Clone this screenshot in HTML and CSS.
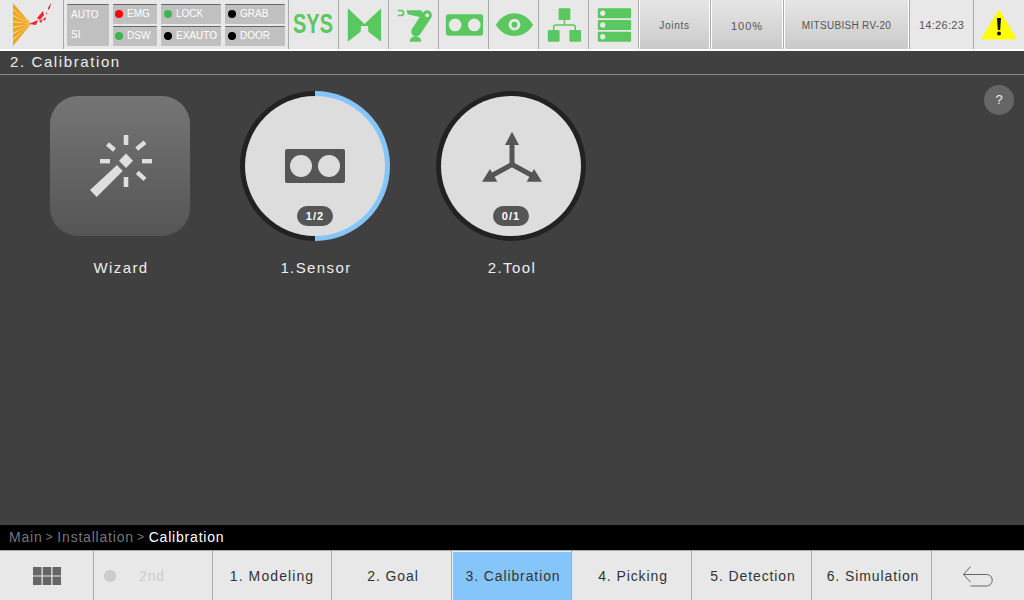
FILE: index.html
```html
<!DOCTYPE html>
<html lang="en">
<head>
  <meta charset="UTF-8" />
  <title>Calibration</title>
  <link rel="stylesheet" href="styles.css">
</head>
<body>

  <header class="topbar">
    <div class="cell logo">
      <svg width="63" height="49" viewBox="0 0 63 49">
        <g fill="#f2a516">
          <polygon points="13,3 13,9 31,24" />
          <polygon points="13,10 13,15 31,24" />
          <polygon points="13,16 13,21 31,24" />
          <polygon points="13,22 13,27 31,24" />
          <polygon points="13,28 13,33 31,24" />
          <polygon points="13,34 13,39 31,24" />
          <polygon points="13,40 13,46 31,24" />
        </g>
        <g fill="#e8252a">
          <polygon points="29,24 38,20 36,25" />
          <polygon points="37,18 43,11 44,15 40,20" />
          <polygon points="43,19 46,17 45,21" />
          <polygon points="39,21 43,19 41,23" />
          <polygon points="46,13 47,12 47,15" />
          <polygon points="48,8 51,3 50,8 48,10" />
        </g>
      </svg>
    </div>

    <div class="cell status">
      <div class="lamp mode">
        <span>AUTO</span>
        <span>SI</span>
      </div>
      <div class="lamp"><i class="dot red"></i>EMG</div>
      <div class="lamp wide"><i class="dot green"></i>LOCK</div>
      <div class="lamp wide"><i class="dot"></i>GRAB</div>
      <div class="lamp"><i class="dot green"></i>DSW</div>
      <div class="lamp wide"><i class="dot"></i>EXAUTO</div>
      <div class="lamp wide"><i class="dot"></i>DOOR</div>
    </div>

    <div class="cell icon"><span class="sys">SYS</span></div>

    <div class="cell icon">
      <svg width="50" height="49" viewBox="338 0 50 49" fill="#5ac85e">
        <polygon points="347,8 364,24 381,8 381,42 368,32 367.500,26 360.500,26 360,32 347,42" />
      </svg>
    </div>

    <div class="cell icon">
      <svg width="50" height="49" viewBox="388 0 50 49" fill="#5ac85e">
        <path d="M397 9.500h3.500a3.200 3.200 0 0 1 0 6.500H397v-1.400h3.300a1.800 1.800 0 0 0 0-3.700H397z" />
        <polygon points="406,10 421,10 425,18 407,14" />
        <path d="M426.700 15 415.700 31.700" stroke="#5ac85e" stroke-width="10" stroke-linecap="round" />
        <circle cx="427" cy="15" r="2" fill="#e8e8e8" />
        <path d="M409 42a6 5.500 0 0 1 12 0z" />
      </svg>
    </div>

    <div class="cell icon">
      <svg width="50" height="49" viewBox="438 0 50 49">
        <rect x="445" y="14" width="38" height="22" rx="2.500" fill="#5ac85e" />
        <circle cx="454.500" cy="25" r="6.500" fill="#e8e8e8" />
        <circle cx="474" cy="25" r="6.500" fill="#e8e8e8" />
      </svg>
    </div>

    <div class="cell icon">
      <svg width="50" height="49" viewBox="488 0 50 49">
        <path d="M495 25C504 9 524 9 533 25C524 40 504 40 495 25Z" fill="#5ac85e" />
        <circle cx="514" cy="24.700" r="6" fill="#e8e8e8" />
        <circle cx="514" cy="24.700" r="3" fill="#5ac85e" />
      </svg>
    </div>

    <div class="cell icon">
      <svg width="50" height="49" viewBox="538 0 50 49" fill="#5ac85e">
        <rect x="558" y="8" width="12" height="12" rx="1" />
        <rect x="547" y="30" width="12" height="12" rx="1" />
        <rect x="569" y="30" width="12" height="12" rx="1" />
        <path d="M564 20v5M553 30v-3a2 2 0 0 1 2-2h18a2 2 0 0 1 2 2v3" fill="none" stroke="#5ac85e" stroke-width="1.500" />
      </svg>
    </div>

    <div class="cell icon">
      <svg width="50" height="49" viewBox="588 0 50 49">
        <g fill="#5ac85e">
          <rect x="597" y="8" width="34" height="10" rx="1" />
          <rect x="597" y="20" width="34" height="10" rx="1" />
          <rect x="597" y="32" width="34" height="10" rx="1" />
        </g>
        <g fill="#e8e8e8">
          <circle cx="602" cy="13" r="2.700" />
          <circle cx="602" cy="25" r="2.700" />
          <circle cx="602" cy="37" r="2.700" />
        </g>
      </svg>
    </div>

    <div class="cell btn joints">Joints</div>
    <div class="cell btn speed">100%</div>
    <div class="cell btn robot">MITSUBISH RV-20</div>
    <div class="cell clock">14:26:23</div>
    <div class="cell alarm">
      <svg width="50" height="49" viewBox="974 0 50 49">
        <path d="M999 12 1014.500 38H983.500Z" fill="#ffff00" stroke="#ffff00" stroke-width="3" stroke-linejoin="round" />
        <path d="M997 18h4l-.8 12h-2.400z" fill="#111" />
        <circle cx="999" cy="33.500" r="2" fill="#111" />
      </svg>
    </div>
  </header>

  <div class="title">2. Calibration</div>

  <main class="content">
    <div class="item">
      <div class="tile">
        <svg width="70" height="70" viewBox="85 131 70 70" fill="#dedede">
          <rect x="123.700" y="135" width="4.600" height="10" />
          <rect x="123.700" y="177" width="4.600" height="10" />
          <rect x="100" y="159" width="10" height="4.400" />
          <rect x="142" y="159" width="10" height="4.400" />
          <path d="M107.500 144 114.500 150M136.700 149 145 142.300M137.300 172.300 145 179.300" stroke="#dedede" stroke-width="4.400" />
          <polygon points="126,153.500 133,160.700 126,168 119,160.700" />
          <polygon points="90,190 117,165 122.700,171 96.700,197" />
        </svg>
      </div>
      <div class="item-label">Wizard</div>
    </div>

    <div class="item">
      <div class="ring half">
        <div class="disc">
          <svg width="60" height="34" viewBox="0 0 60 34">
            <rect width="60" height="34" rx="2" fill="#555" />
            <circle cx="16" cy="17" r="11" fill="#ddd" />
            <circle cx="44" cy="17" r="11" fill="#ddd" />
          </svg>
          <span class="badge">1/2</span>
        </div>
      </div>
      <div class="item-label">1.Sensor</div>
    </div>

    <div class="item">
      <div class="ring">
        <div class="disc">
          <svg class="axes" width="62" height="52" viewBox="480 131 62 52" fill="#555">
            <path d="M512 140v24.500L491 176M512 164.500 533 176" fill="none" stroke="#555" stroke-width="5" />
            <polygon points="512,131.700 519,145 505,145" />
            <polygon points="482,181.700 490,169 497.300,181.700" />
            <polygon points="542,181.700 534,169 526.700,181.700" />
          </svg>
          <span class="badge">0/1</span>
        </div>
      </div>
      <div class="item-label">2.Tool</div>
    </div>

    <div class="help">?</div>
  </main>

  <div class="crumbs">
    <span>Main</span><span class="sep">&gt;</span><span>Installation</span><span class="sep">&gt;</span><span class="current">Calibration</span>
  </div>

  <nav class="tabs">
    <div class="tab home">
      <svg width="28" height="18" viewBox="0 0 28 18" fill="#666">
        <rect width="8.500" height="8.500" />
        <rect x="9.750" width="8.500" height="8.500" />
        <rect x="19.500" width="8.500" height="8.500" />
        <rect y="9.500" width="8.500" height="8.500" />
        <rect x="9.750" y="9.500" width="8.500" height="8.500" />
        <rect x="19.500" y="9.500" width="8.500" height="8.500" />
      </svg>
    </div>
    <div class="tab second"><i class="second-dot"></i>2nd</div>
    <div class="tab modeling">1. Modeling</div>
    <div class="tab">2. Goal</div>
    <div class="tab active">3. Calibration</div>
    <div class="tab">4. Picking</div>
    <div class="tab">5. Detection</div>
    <div class="tab">6. Simulation</div>
    <div class="tab back">
      <svg width="32" height="22" viewBox="0 0 32 22" fill="none" stroke="#666">
        <path d="M8.500 1.500 1.500 9.500 8.500 17M1.500 9.500H24.500a5.500 5.500 0 0 1 0 11.500H8.500" />
      </svg>
    </div>
  </nav>

</body>
</html>
```

FILE: styles.css
```css
* {
  box-sizing: border-box;
}
body {
  margin: 0;
  width: 1024px;
  height: 600px;
  overflow: hidden;
  display: flex;
  flex-direction: column;
  background: #404040;
  font-family: "Liberation Sans", Arial, sans-serif;
}

/* top bar */
.topbar {
  display: flex;
  flex: none;
  height: 51px;
  background: #e8e8e8;
  border-bottom: 2px solid #fff;
}
.cell {
  flex: none;
  width: 50px;
  display: flex;
  align-items: center;
  justify-content: center;
  border-right: 1px solid #aaa;
  color: #555;
  font-size: 10px;
  letter-spacing: .5px;
}
.logo {
  width: 64px;
}
.status {
  width: 225px;
  display: grid;
  grid-template-columns: 42px 44px 60px 60px;
  grid-template-rows: 20px 20px;
  gap: 2px 4px;
  align-items: stretch;
  align-content: center;
  justify-content: start;
  padding-left: 3px;
}
.lamp {
  display: flex;
  align-items: center;
  padding-left: 2px;
  border-top: 1px solid #666;
  border-radius: 1px;
  background: #c0c0c0;
  color: #fff;
  font-size: 10px;
  letter-spacing: 0;
  line-height: 1;
}
.wide {
  padding-left: 3px;
}
.mode {
  grid-row: span 2;
  flex-direction: column;
  align-items: flex-start;
  justify-content: space-around;
  padding-left: 4px;
}
.dot {
  width: 8px;
  height: 8px;
  margin-right: 4px;
  border-radius: 50%;
  background: #000;
}
.red {
  background: #f00;
}
.green {
  background: #3cb54a;
}
.sys {
  color: #5ac85e;
  font-size: 27px;
  font-weight: bold;
  letter-spacing: 0;
  transform: scaleX(.74);
}
.btn {
  height: 49px;
  padding-top: 2px;
  background: linear-gradient(#e6e6e6, #cacaca);
  box-shadow: inset 1px 0 0 #fff, inset -1px 0 0 #fff;
}
.joints {
  width: 72px;
  padding-top: 1px;
  letter-spacing: .7px;
}
.speed {
  width: 73px;
  font-size: 11px;
  letter-spacing: 1px;
}
.robot {
  width: 126px;
  letter-spacing: .3px;
}
.clock {
  width: 64px;
  font-size: 11px;
  letter-spacing: .3px;
}
.alarm {
  flex: 1;
  border-right: 0;
}

/* page title */
.title {
  flex: none;
  height: 24px;
  padding: 2px 0 0 10px;
  border-bottom: 1px solid #888;
  color: #eee;
  font-size: 15px;
  letter-spacing: 1.600px;
  line-height: 18px;
}

/* main area */
.content {
  flex: 1;
  position: relative;
  display: grid;
  grid-template-columns: 195px 196px 150px;
  align-content: start;
  padding: 16px 0 0 45px;
}
.item {
  width: 150px;
  display: flex;
  flex-direction: column;
  align-items: center;
}
.tile {
  width: 140px;
  height: 140px;
  margin: 5px 0;
  display: flex;
  align-items: center;
  justify-content: center;
  border-radius: 28px;
  background: linear-gradient(#757575, #555);
}
.ring {
  width: 150px;
  height: 150px;
  padding: 5px;
  border-radius: 50%;
  background: #222;
}
.half {
  background: conic-gradient(#85c5f9 0 50%, #222 50% 100%);
}
.disc {
  position: relative;
  width: 100%;
  height: 100%;
  display: flex;
  align-items: center;
  justify-content: center;
  border-radius: 50%;
  background: #ddd;
}
.axes {
  margin-bottom: 18px;
}
.badge {
  position: absolute;
  left: 52px;
  top: 110px;
  width: 36px;
  height: 20px;
  border-radius: 10px;
  background: #555;
  color: #fff;
  font-size: 11px;
  font-weight: bold;
  letter-spacing: 1px;
  line-height: 20px;
  text-align: center;
}
.item-label {
  margin-top: 18px;
  padding-left: 2px;
  color: #eee;
  font-size: 15px;
  letter-spacing: 1.400px;
  line-height: 18px;
}
.help {
  position: absolute;
  top: 10px;
  right: 10px;
  width: 30px;
  height: 30px;
  border-radius: 50%;
  background: #666;
  color: #eee;
  font-size: 13px;
  line-height: 30px;
  text-align: center;
}

/* breadcrumb */
.crumbs {
  flex: none;
  height: 25px;
  display: flex;
  align-items: center;
  padding: 0 0 2px 9px;
  background: #000;
  color: #777;
  font-size: 14px;
  letter-spacing: .8px;
}
.sep {
  margin: 0 4px 0 3px;
  font-size: 12px;
}
.current {
  color: #fff;
}

/* bottom tabs */
.tabs {
  flex: none;
  height: 50px;
  display: flex;
  background: #e8e8e8;
  border-top: 1px solid #aaa;
}
.tab {
  flex: none;
  width: 120px;
  display: flex;
  align-items: center;
  justify-content: center;
  padding-left: 3px;
  border-right: 1px solid #aaa;
  color: #333;
  font-size: 14px;
  letter-spacing: .9px;
}
.home {
  width: 94px;
  padding-left: 0;
}
.second {
  width: 119px;
  justify-content: flex-start;
  padding-left: 10px;
  color: #ccc;
}
.second-dot {
  width: 12px;
  height: 12px;
  margin-right: 23px;
  border-radius: 50%;
  background: #ccc;
}
.modeling {
  width: 119px;
  padding-left: 0;
  letter-spacing: 1.100px;
}
.active {
  background: #85c5f9;
  box-shadow: inset 1px 1px 0 #e8f2fb;
}
.back {
  flex: 1;
  border-right: 0;
  padding-left: 0;
}
```
